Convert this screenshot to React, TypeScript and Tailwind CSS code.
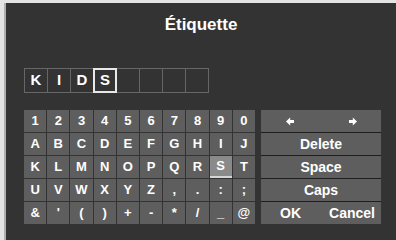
import React from 'react'

const ROWS: string[][] = [
  ['1', '2', '3', '4', '5', '6', '7', '8', '9', '0'],
  ['A', 'B', 'C', 'D', 'E', 'F', 'G', 'H', 'I', 'J'],
  ['K', 'L', 'M', 'N', 'O', 'P', 'Q', 'R', 'S', 'T'],
  ['U', 'V', 'W', 'X', 'Y', 'Z', ',', '.', ':', ';'],
  ['&', "'", '(', ')', '+', '-', '*', '/', '_', '@'],
]

const LABEL = ['K', 'I', 'D', 'S', '', '', '', '']

function Key({ ch, active }: { ch: string; active: boolean }) {
  if (active) {
    return (
      <div className="flex h-[22px] flex-col bg-[#8a8a8a]">
        <div className="flex flex-1 items-center justify-center">{ch}</div>
        <div className="h-[3px] bg-[#d6d6d6]" />
      </div>
    )
  }
  return <div className="flex h-[22px] items-center justify-center bg-[#5e5e5e]">{ch}</div>
}

function Arrow({ right }: { right?: boolean }) {
  return (
    <svg width="8" height="9" viewBox="0 0 8 9" className={right ? 'rotate-180' : ''}>
      <path d="M0 4.5 L4.2 0.5 L4.2 8.5 Z M4 3 H8 V6 H4 Z" fill="white" />
    </svg>
  )
}

export default function App() {
  return (
    <div className="h-[240px] w-[396px] overflow-hidden bg-[#e4e4e4] pl-[4px] pt-[3px]">
      <div
        className="h-full border-l-2 border-[#b0b0b0] bg-[#333333] text-white"
        style={{ fontFamily: '"Liberation Sans", Arial, sans-serif' }}
      >
        <div className="pt-[11px] text-center text-[17px] font-bold leading-[22px]">Étiquette</div>

        <div className="ml-[18px] mt-[32px] flex">
          {LABEL.map((c, i) => (
            <div
              key={i}
              className={
                i === 3
                  ? 'relative z-10 -ml-px flex h-[25px] w-[24px] items-center justify-center border-2 border-[#e8e8e8] text-[15px] font-bold first:ml-0'
                  : '-ml-px flex h-[25px] w-[24px] items-center justify-center border border-[#666666] text-[15px] font-bold first:ml-0'
              }
            >
              {c}
            </div>
          ))}
        </div>

        <div className="ml-[18px] mt-[17px] flex gap-[6px] text-[13px] font-bold">
          <div className="grid w-[231px] grid-cols-10 gap-px">
            {ROWS.map((row, r) =>
              row.map((ch, c) => <Key key={`${r}-${c}`} ch={ch} active={r === 2 && c === 8} />),
            )}
          </div>
          <div className="flex w-[120px] flex-col gap-px bg-[#1f1f1f] text-[14px]">
            <div className="flex h-[22px] items-center justify-between bg-[#5e5e5e] pl-[25px] pr-[24px]">
              <Arrow />
              <Arrow right />
            </div>
            <div className="flex h-[22px] items-center justify-center bg-[#5e5e5e]">Delete</div>
            <div className="flex h-[22px] items-center justify-center bg-[#5e5e5e]">Space</div>
            <div className="flex h-[22px] items-center justify-center bg-[#5e5e5e]">Caps</div>
            <div className="flex h-[22px] items-center justify-between bg-[#5e5e5e] pl-[19px] pr-[6px]">
              <span>OK</span>
              <span>Cancel</span>
            </div>
          </div>
        </div>
      </div>
    </div>
  )
}
